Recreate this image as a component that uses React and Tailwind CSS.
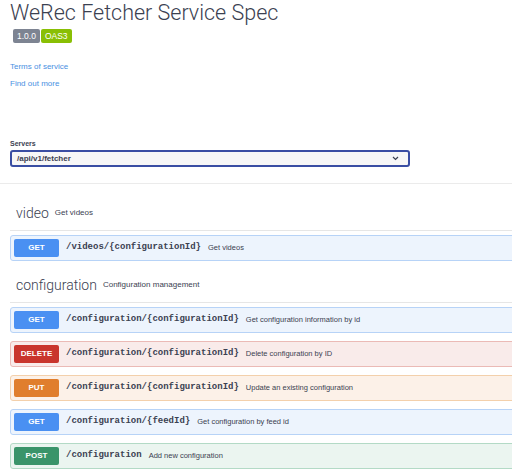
import React from 'react';

const METHODS = {
  GET: { badge: 'bg-[#4a90f2]', block: 'bg-[#edf4fd] border-[#b7d3f7]' },
  DELETE: { badge: 'bg-[#c9352d]', block: 'bg-[#f9ebea] border-[#ebbab6]' },
  PUT: { badge: 'bg-[#e07e2d]', block: 'bg-[#fcf1e8] border-[#f3d0ab]' },
  POST: { badge: 'bg-[#3a946a]', block: 'bg-[#ebf5f0] border-[#b3dac6]' },
};

const tags = [
  {
    name: 'video',
    desc: 'Get videos',
    ops: [{ method: 'GET', path: '/videos/{configurationId}', summary: 'Get videos' }],
  },
  {
    name: 'configuration',
    desc: 'Configuration management',
    ops: [
      { method: 'GET', path: '/configuration/{configurationId}', summary: 'Get configuration information by id' },
      { method: 'DELETE', path: '/configuration/{configurationId}', summary: 'Delete configuration by ID' },
      { method: 'PUT', path: '/configuration/{configurationId}', summary: 'Update an existing configuration' },
      { method: 'GET', path: '/configuration/{feedId}', summary: 'Get configuration by feed id' },
      { method: 'POST', path: '/configuration', summary: 'Add new configuration' },
    ],
  },
];

const Operation = ({ method, path, summary }) => {
  const m = METHODS[method];
  return (
    <div className={`flex items-center h-[26px] border rounded-[3px] pl-[3px] ${m.block}`}>
      <div className={`w-[45px] h-[18px] rounded-[2px] flex items-center justify-center text-white text-[8px] font-bold ${m.badge}`}>
        {method}
      </div>
      <span className="ml-[7px] text-[9px] font-bold text-[#3b4151] font-['Liberation_Mono','Courier_New',monospace]">
        {path}
      </span>
      <span className="ml-[7px] text-[7.5px] text-[#3b4151]">{summary}</span>
    </div>
  );
};

const Tag = ({ tag, first }) => (
  <div>
    <div className={`flex items-center border-b border-[#e6e6e6] pb-[8px] pl-[6px] ${first ? 'pt-[20px]' : 'pt-[15px]'}`}>
      <span className="text-[14px] leading-[18px] font-light text-[#3b4151] font-['Roboto',sans-serif]">
        {tag.name}
      </span>
      <span className="ml-[6px] text-[8px] text-[#3b4151]">{tag.desc}</span>
    </div>
    <div className="pt-[4px] flex flex-col gap-[8px]">
      {tag.ops.map((op, i) => (
        <Operation key={i} {...op} />
      ))}
    </div>
  </div>
);

export default function App() {
  return (
    <div className="w-[512px] h-[476px] overflow-hidden bg-white font-['Liberation_Sans',Arial,sans-serif]">
      <div className="w-[512px] border-b border-[#ebebeb] px-[10px] pb-[16px]">
        <h1 className="text-[21.5px] leading-[26px] font-light text-[#3b4151] font-['Roboto',sans-serif]">
          WeRec Fetcher Service Spec
        </h1>
        <div className="flex gap-[1px] mt-[3px] ml-[3px]">
          <span className="h-[14px] px-[4px] flex items-center rounded-[2px] bg-[#7d8492] text-white text-[8.5px]">1.0.0</span>
          <span className="h-[14px] px-[4px] flex items-center rounded-[2px] bg-[#89bf04] text-white text-[8.5px]">OAS3</span>
        </div>
        <div className="mt-[18px] text-[8px] leading-[12px] text-[#4990e2]">Terms of service</div>
        <div className="mt-[5px] text-[8px] leading-[12px] text-[#4990e2]">Find out more</div>
        <div className="mt-[49px] text-[7px] leading-[10px] font-bold text-[#3b4151]">Servers</div>
        <div className="mt-[1px] w-[400px] h-[17px] border-2 border-[#3a4ea3] rounded-[3px] bg-[#f7f7f7] flex items-center justify-between pl-[5px] pr-[9px]">
          <span className="text-[8px] font-bold text-[#3b4151]">/api/v1/fetcher</span>
          <svg width="7" height="5" viewBox="0 0 7 5">
            <path d="M1 1l2.5 2.5L6 1" stroke="#3b4151" strokeWidth="1.2" fill="none" />
          </svg>
        </div>
      </div>
      <div className="pl-[10px] w-[540px]">
        {tags.map((t, i) => (
          <Tag key={t.name} tag={t} first={i === 0} />
        ))}
      </div>
    </div>
  );
}
